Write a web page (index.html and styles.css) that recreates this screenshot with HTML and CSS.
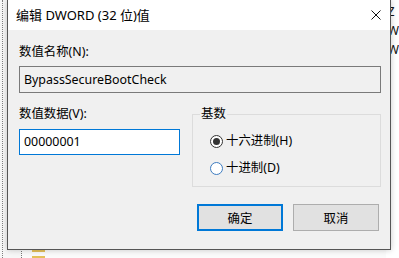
FILE: index.html
```html
<!DOCTYPE html>
<html lang="zh-CN">
<head>
<meta charset="utf-8">
<title>编辑 DWORD (32 位)值</title>
<link rel="stylesheet" href="styles.css">
</head>
<body>
<div class="desk">
  <div class="tree">
    <div class="treeline"></div>
    <div class="folders">
      <div class="folder f1"></div>
      <div class="folder f2"></div>
    </div>
  </div>
  <div class="list">
    <div class="lrow">Z</div>
    <div class="lrow">W</div>
    <div class="lrow">W</div>
  </div>
</div>
<div class="dialog">
  <div class="titlebar">
    <span class="title">编辑 DWORD (32 位)值</span>
    <svg class="close" width="10" height="10" viewBox="0 0 10 10"><path d="M0.5 0.5 L9.5 9.5 M9.5 0.5 L0.5 9.5" stroke="#111" stroke-width="1" fill="none"/></svg>
  </div>
  <div class="body">
    <div class="lbl">数值名称(N):</div>
    <div class="namebox">BypassSecureBootCheck</div>
    <div class="mid">
      <div class="leftcol">
        <div class="lbl">数值数据(V):</div>
        <div class="datain">00000001</div>
      </div>
      <fieldset class="group">
        <legend>基数</legend>
        <div class="rrow"><span class="radio checked"></span><span>十六进制(H)</span></div>
        <div class="rrow second"><span class="radio focus"></span><span>十进制(D)</span></div>
      </fieldset>
    </div>
    <div class="buttons">
      <div class="btn default">确定</div>
      <div class="btn">取消</div>
    </div>
  </div>
</div>
</body>
</html>
```

FILE: styles.css
```css
html, body {
  margin: 0;
  padding: 0;
}
body {
  width: 399px;
  height: 258px;
  overflow: hidden;
  position: relative;
  background: #ffffff;
  font-family: "Noto Sans", "Noto Sans CJK SC", sans-serif;
  font-size: 12.4px;
  color: #000;
}
.desk {
  display: flex;
  height: 258px;
}
.tree {
  width: 391px;
  height: 258px;
  display: flex;
  flex-direction: column;
  background: #f7f7f7;
  position: relative;
}
.treeline {
  position: absolute;
  left: 2px;
  top: 0;
  bottom: 0;
  border-left: 1px dotted #808080;
}
.folders {
  margin-top: auto;
  margin-left: 21px;
  border-left: 1px dotted #777;
  padding-left: 10px;
  background: #fbfbfb;
}
.folder {
  width: 13px;
  background: #e5c15a;
}
.f1 {
  height: 5px;
  margin-bottom: 4px;
}
.f2 {
  height: 2px;
}
.list {
  flex: 1;
  padding-top: 2px;
  padding-left: 1px;
  background: #fff;
}
.lrow {
  line-height: 19px;
  color: #111;
}
.dialog {
  position: absolute;
  left: 7px;
  top: 0;
  width: 382px;
  height: 249px;
  border: 1px solid #555;
  border-top: none;
  background: #f0f0f0;
  box-shadow: 0 0 6px rgba(0, 0, 0, 0.22);
}
.titlebar {
  height: 30px;
  background: #fff;
  display: flex;
  align-items: center;
  justify-content: space-between;
  padding: 0 9px 0 8px;
}
.title {
  font-size: 13px;
  line-height: 16px;
}
.close {
  display: block;
}
.body {
  padding: 14px 9px 0 11px;
}
.lbl {
  line-height: 16px;
  height: 16px;
}
.namebox {
  margin-top: 6px;
  height: 27px;
  box-sizing: border-box;
  border: 1px solid #7a7a7a;
  background: #f0f0f0;
  padding-left: 4px;
  line-height: 25px;
}
.mid {
  margin-top: 13px;
  display: grid;
  grid-template-columns: 161px 189px;
  column-gap: 12px;
  align-items: start;
}
.datain {
  margin-top: 7px;
  height: 26px;
  box-sizing: border-box;
  border: 1px solid #0078d7;
  background: #fff;
  padding-left: 4px;
  line-height: 24px;
}
.group {
  margin: 0;
  padding: 11px 0 10px 0;
  border: 1px solid #dcdcdc;
  min-width: 0;
}
.group legend {
  margin-left: 7px;
  padding: 0 1px;
  line-height: 16px;
}
.rrow {
  display: flex;
  align-items: center;
  height: 16px;
  line-height: 16px;
  padding-left: 17px;
}
.rrow.second {
  margin-top: 11px;
}
.radio {
  width: 13px;
  height: 13px;
  box-sizing: border-box;
  border-radius: 50%;
  border: 1px solid #333;
  background: #fff;
  margin-right: 3px;
  display: flex;
  align-items: center;
  justify-content: center;
}
.radio.checked::after {
  content: "";
  width: 7px;
  height: 7px;
  border-radius: 50%;
  background: #333;
}
.radio.focus {
  border-color: #3d7cc0;
}
.buttons {
  margin-top: 17px;
  display: flex;
  justify-content: flex-end;
  gap: 10px;
  padding-right: 2px;
}
.btn {
  width: 86px;
  height: 27px;
  box-sizing: border-box;
  border: 1px solid #adadad;
  background: #e1e1e1;
  display: flex;
  align-items: center;
  justify-content: center;
}
.btn.default {
  border: 2px solid #0078d7;
}
```
